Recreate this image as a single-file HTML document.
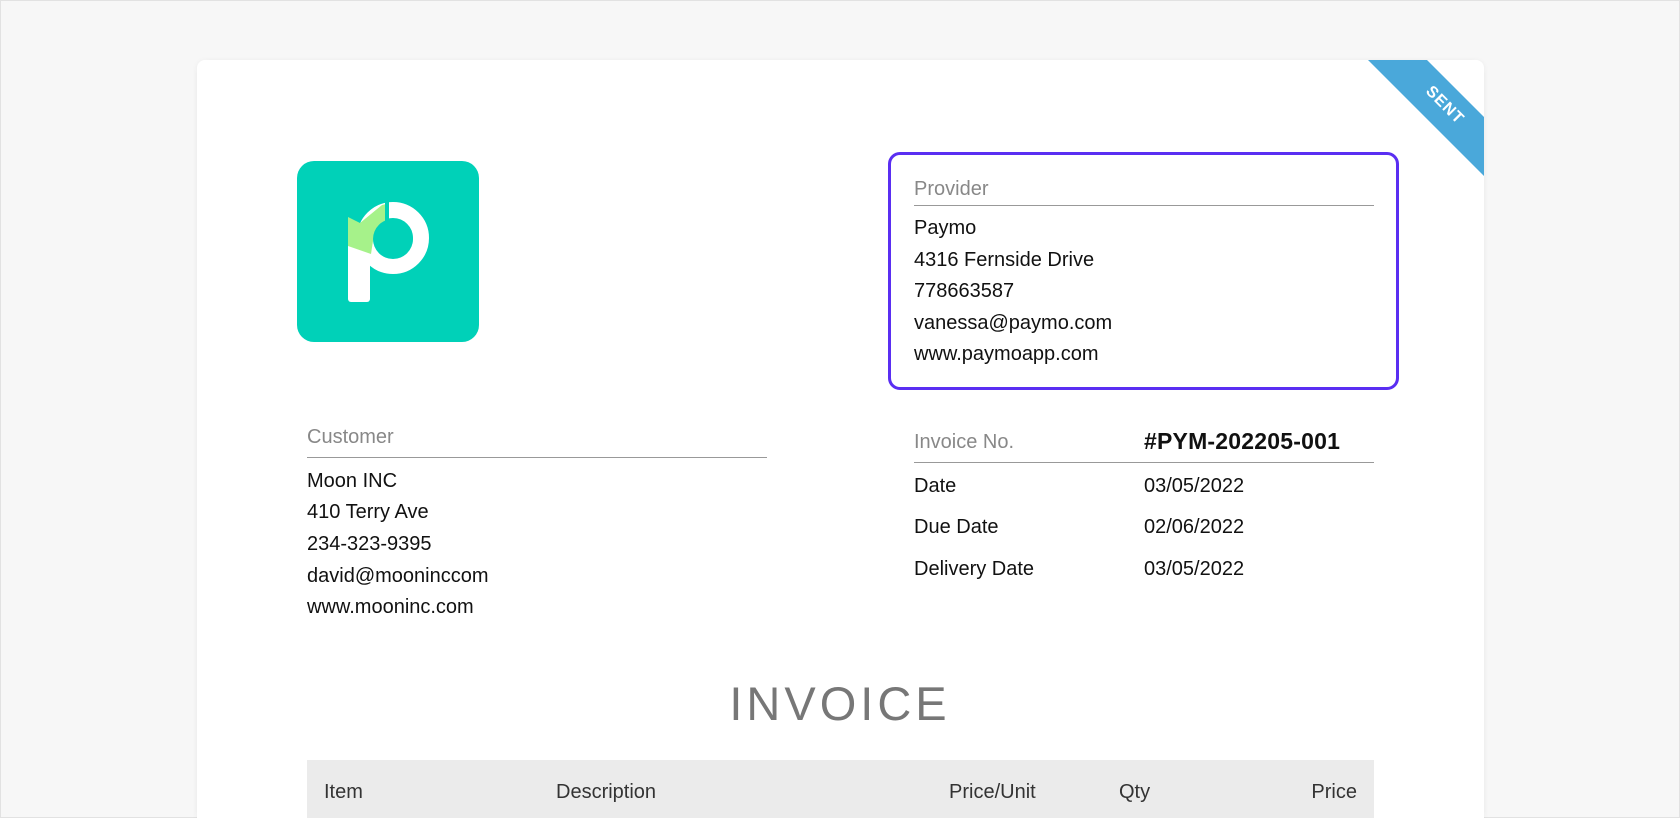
<!DOCTYPE html>
<html><head><meta charset="utf-8"><style>
*{margin:0;padding:0;box-sizing:border-box}
html,body{width:1680px;height:818px;overflow:hidden}
body{background:#f7f7f7;font-family:"Liberation Sans",sans-serif;position:relative}
.frame{position:absolute;left:0;top:0;width:1680px;height:818px;border:1px solid #e2e2e2}
.card{position:absolute;left:197px;top:60px;width:1287px;height:758px;background:#fff;border-radius:8px 8px 0 0;box-shadow:0 1px 6px rgba(0,0,0,.06);overflow:hidden}
.t{position:absolute;font-size:20px;line-height:24px;color:#111;white-space:nowrap;margin-top:2px}
.g{color:#888}
.line{position:absolute;height:1px;background:#999}
</style></head><body>
<div class="frame"></div>
<div class="card">
<svg style="position:absolute;left:0;top:0" width="1287" height="200">
<polygon points="1171,0 1230,0 1287,57 1287,116" fill="#4aa8da"/>
<text x="1248" y="50" transform="rotate(45 1248 45)" fill="#fff" font-family="Liberation Sans" font-weight="bold" font-size="16" text-anchor="middle" letter-spacing="1">SENT</text>
</svg>
<div style="position:absolute;left:100px;top:101px;width:182px;height:181px;background:#00d1b8;border-radius:17px">
<svg width="182" height="181" viewBox="0 0 182 181">
<circle cx="96" cy="77" r="28" fill="none" stroke="#fff" stroke-width="16"/>
<path d="M51 76 L73 82 V138 a3 3 0 0 1 -3 3 H54 a3 3 0 0 1 -3 -3 Z" fill="#fff"/>
<polygon points="51,56 63,62 85,44 89,43 89,69 76,80 74,93 51,85" fill="#a6f28a"/>
<circle cx="96" cy="78" r="20" fill="#00d1b8"/>
<rect x="88" y="38" width="4" height="22" fill="#00d1b8"/>
</svg></div>
<div style="position:absolute;left:691px;top:92px;width:511px;height:238px;border:3px solid #5a2ef2;border-radius:12px"></div>
</div>
<div class="t g" style="left:914px;top:175px">Provider</div>
<div class="line" style="left:914px;top:205px;width:460px"></div>
<div class="t" style="left:914px;top:214px">Paymo</div>
<div class="t" style="left:914px;top:246px">4316 Fernside Drive</div>
<div class="t" style="left:914px;top:277px">778663587</div>
<div class="t" style="left:914px;top:309px">vanessa@paymo.com</div>
<div class="t" style="left:914px;top:340px">www.paymoapp.com</div>

<div class="t g" style="left:307px;top:423px">Customer</div>
<div class="line" style="left:307px;top:457px;width:460px"></div>
<div class="t" style="left:307px;top:467px">Moon INC</div>
<div class="t" style="left:307px;top:498px">410 Terry Ave</div>
<div class="t" style="left:307px;top:530px">234-323-9395</div>
<div class="t" style="left:307px;top:562px">david@mooninccom</div>
<div class="t" style="left:307px;top:593px">www.mooninc.com</div>

<div class="t g" style="left:914px;top:428px">Invoice No.</div>
<div class="t" style="left:1144px;top:427px;font-weight:bold;font-size:23px;letter-spacing:0.2px">#PYM-202205-001</div>
<div class="line" style="left:914px;top:462px;width:460px"></div>
<div class="t" style="left:914px;top:472px">Date</div>
<div class="t" style="left:1144px;top:472px">03/05/2022</div>
<div class="t" style="left:914px;top:513px">Due Date</div>
<div class="t" style="left:1144px;top:513px">02/06/2022</div>
<div class="t" style="left:914px;top:555px">Delivery Date</div>
<div class="t" style="left:1144px;top:555px">03/05/2022</div>

<div class="t" style="left:0;width:1680px;text-align:center;top:676px;font-size:47px;line-height:52px;color:#777;letter-spacing:4px">INVOICE</div>

<div style="position:absolute;left:307px;top:760px;width:1067px;height:70px;background:#ebebeb"></div>
<div class="t" style="left:324px;top:778px;color:#333">Item</div>
<div class="t" style="left:556px;top:778px;color:#333">Description</div>
<div class="t" style="left:949px;top:778px;color:#333">Price/Unit</div>
<div class="t" style="left:1119px;top:778px;color:#333">Qty</div>
<div class="t" style="left:1300px;width:57px;text-align:right;top:778px;color:#333">Price</div>
</body></html>
